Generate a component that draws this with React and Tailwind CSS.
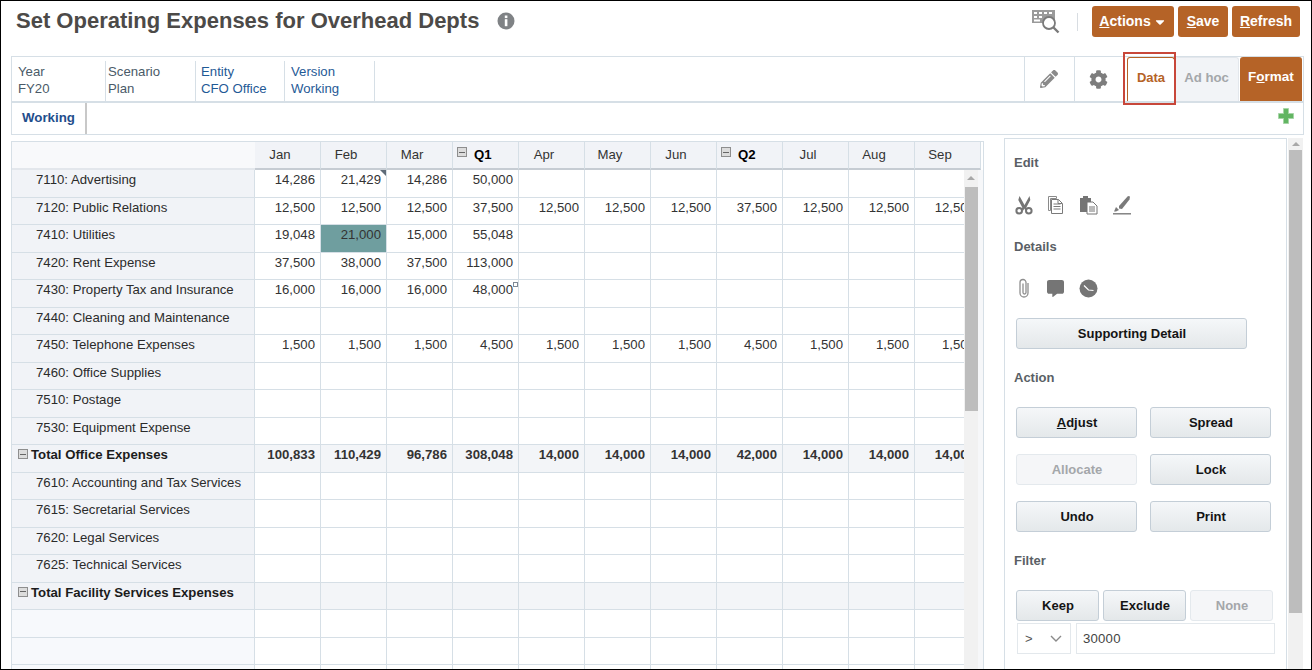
import React from "react";
import { FaPencilAlt, FaCog, FaCommentAlt, FaCaretDown } from "react-icons/fa";

const months = ["Jan","Feb","Mar","Q1","Apr","May","Jun","Q2","Jul","Aug","Sep"];
const e = "";
const rows = [
  ["7110: Advertising", ["14,286","21,429","14,286","50,000"], 0],
  ["7120: Public Relations", ["12,500","12,500","12,500","37,500","12,500","12,500","12,500","37,500","12,500","12,500","12,500"], 0],
  ["7410: Utilities", ["19,048","21,000","15,000","55,048"], 0],
  ["7420: Rent Expense", ["37,500","38,000","37,500","113,000"], 0],
  ["7430: Property Tax and Insurance", ["16,000","16,000","16,000","48,000"], 0],
  ["7440: Cleaning and Maintenance", [], 0],
  ["7450: Telephone Expenses", ["1,500","1,500","1,500","4,500","1,500","1,500","1,500","4,500","1,500","1,500","1,500"], 0],
  ["7460: Office Supplies", [], 0],
  ["7510: Postage", [], 0],
  ["7530: Equipment Expense", [], 0],
  ["Total Office Expenses", ["100,833","110,429","96,786","308,048","14,000","14,000","14,000","42,000","14,000","14,000","14,000"], 1],
  ["7610: Accounting and Tax Services", [], 0],
  ["7615: Secretarial Services", [], 0],
  ["7620: Legal Services", [], 0],
  ["7625: Technical Services", [], 0],
  ["Total Facility Services Expenses", [], 1],
  [e, [], 2],
  [e, [], 2],
  [e, [], 2],
];

function Minus() {
  return (
    <span className="flex w-[10px] h-[10px] shrink-0 items-center justify-center border border-[#8e8e8e] bg-[#dcdcdc]">
      <span className="block w-[6px] h-px bg-[#666]" />
    </span>
  );
}

function Row({ r, i }) {
  const [label, vals, kind] = r;
  return (
    <div className="flex h-[27.5px]">
      <div className={`w-[243px] shrink-0 box-border border-b border-r border-[#d6dfe6] text-[13.2px] leading-[17px] pt-[1px] flex items-start ${kind === 2 ? "bg-[#f7f9fc]" : "bg-[#f1f3f7]"} ${kind === 1 ? "font-bold pl-[6px] text-[#1c1c1c]" : "pl-[24px] text-[#2b2b2b]"}`}>
        {kind === 1 && <span className="mr-[3px] mt-[3px] flex"><Minus /></span>}
        <span className="whitespace-nowrap">{label}</span>
      </div>
      {months.map((m, c) => {
        const teal = i === 2 && c === 1;
        return (
          <div key={m} className={`relative w-[66px] shrink-0 box-border border-b border-r border-[#d6dfe6] text-right pr-[5px] pt-[1px] text-[13.2px] leading-[17px] whitespace-nowrap ${kind === 1 ? "font-bold text-[#333] bg-[#f3f5f8]" : "text-[#333]"} ${teal ? "bg-[#6f9e9f]" : ""}`}>
            {vals[c] || ""}
            {i === 0 && c === 1 && <span className="absolute top-0 right-0 w-0 h-0 border-t-[6px] border-l-[6px] border-t-[#5f6b78] border-l-transparent" />}
            {i === 4 && c === 3 && <span className="absolute top-[2px] right-0 w-[5px] h-[5px] border border-[#7f8a95]" />}
          </div>
        );
      })}
    </div>
  );
}

function Header() {
  return (
    <div className="flex h-[28px] w-[972px]">
      <div className="w-[243px] shrink-0 box-border bg-[#f8f9fb] border-b-2 border-[#e3e7ec]" />
      {months.map((m) => {
        const q = m[0] === "Q";
        return (
          <div key={m} className={`w-[66px] shrink-0 box-border bg-[#f1f3f7] border-r border-b-2 border-r-[#d6dfe6] border-b-[#c6ccd3] text-[13.2px] leading-[17px] pt-[4px] ${q ? "font-bold text-black pl-[4px] flex" : "text-[#333] text-center pr-[15px]"}`}>
            {q ? (<><span className="mt-[1px] mr-[7px] flex h-[10px]"><Minus /></span><span>{m}</span></>) : m}
          </div>
        );
      })}
    </div>
  );
}

function Btn({ children, w = "w-[121px]", disabled }) {
  return (
    <button className={`${w} h-[31px] box-border rounded-[3px] border pl-[1px] text-[13px] font-bold leading-none ${disabled ? "border-[#e4e9ed] bg-[#f5f6f8] text-[#a4a7aa]" : "border-[#c4ced7] bg-gradient-to-b from-[#f5f7f9] to-[#e4e8ea] text-[#141414]"}`}>
      {children}
    </button>
  );
}

function OBtn({ children, w }) {
  return <button className={`${w} h-[31px] rounded-[3px] bg-[#b56327] text-white text-[14px] font-bold flex items-center justify-center`}>{children}</button>;
}

function Dim({ a, b, blue, w, pl }) {
  return (
    <div className={`${w} ${pl} box-border shrink-0 border-r border-[#d6dfe6] h-[41px] mt-[4px] text-[13.2px] leading-[17px] pt-[2px] text-[#4a5a68]`}>
      <div className={blue ? "text-[#1f5a96]" : ""}>{a}</div>
      <div className={blue ? "text-[#1f5a96]" : ""}>{b}</div>
    </div>
  );
}

const Label = ({ children, className = "" }) => <div className={`text-[13px] font-bold text-[#5a5f66] leading-[15px] ${className}`}>{children}</div>;

export default function App() {
  return (
    <div className="w-[1312px] h-[670px] box-border border border-black overflow-hidden bg-white relative" style={{ fontFamily: '"Liberation Sans", Arial, sans-serif' }}>
      {/* title bar */}
      <div className="h-[55px] flex items-start pl-[15px] pr-[11px]">
        <h1 className="text-[22px] font-bold text-[#4c4a48] leading-[26px] mt-[7px]">Set Operating Expenses for Overhead Depts</h1>
        <svg className="ml-[18px] mt-[11px]" width="18" height="18" viewBox="0 0 18 18"><circle cx="9" cy="9" r="8.5" fill="#7f8285"/><rect x="7.8" y="3.5" width="2.6" height="2.6" fill="#fff"/><rect x="7.8" y="7.2" width="2.6" height="7" fill="#fff"/></svg>
        <div className="flex-1" />
        <svg className="mt-[8px]" width="28" height="26" viewBox="0 0 28 26">
          <path d="M0 1h23v13H0z" fill="#9a9a9a"/>
          <g fill="#fff"><rect x="2" y="3" width="3" height="2"/><rect x="7" y="3" width="3" height="2"/><rect x="12" y="3" width="3" height="2"/><rect x="17" y="3" width="3" height="2"/><rect x="2" y="7" width="3" height="2"/><rect x="7" y="7" width="3" height="2"/><rect x="2" y="10.5" width="6" height="2"/></g>
          <circle cx="17" cy="14" r="6" fill="#fff" stroke="#7a7a7a" strokeWidth="1.8"/>
          <path d="M21.5 18.5l5 5" stroke="#7a7a7a" strokeWidth="2.4"/>
        </svg>
        <div className="w-px h-[18px] bg-[#d8dde2] mt-[12px] ml-[17px] mr-[14px]" />
        <div className="flex gap-[4px] mt-[5px]">
          <OBtn w="w-[82px]"><u>A</u>ctions<FaCaretDown className="ml-[2px]" size={14}/></OBtn>
          <OBtn w="w-[50px]"><u>S</u>ave</OBtn>
          <OBtn w="w-[68px]"><u>R</u>efresh</OBtn>
        </div>
      </div>

      {/* POV bar */}
      <div className="ml-[10px] w-[1293px] h-[47px] box-border border border-[#d6dfe6] border-b-2 flex">
        <Dim w="w-[94px]" pl="pl-[6px]" a="Year" b="FY20" />
        <Dim w="w-[90px]" pl="pl-[2px]" a="Scenario" b="Plan" />
        <Dim w="w-[89px]" pl="pl-[5px]" a="Entity" b="CFO Office" blue />
        <Dim w="w-[90px]" pl="pl-[6px]" a="Version" b="Working" blue />
        <div className="flex-1" />
        <div className="w-[50px] border-l border-[#d6dfe6] flex items-center justify-center text-[#8a8a8a] pr-[2px]"><FaPencilAlt size={18}/></div>
        <div className="w-[50px] border-l border-[#d6dfe6] flex items-center justify-center text-[#7d7d7d] pr-[2px]"><FaCog size={19}/></div>
        <div className="w-[48px] ml-[3px] box-border border border-b-0 border-[#b56327] rounded-t-[3px] bg-white text-[#b56327] text-[13px] font-bold flex items-center justify-center pb-[3px]">Data</div>
        <div className="w-[64px] bg-[#f2f4f7] border-t border-r border-[#e3e7ec] rounded-t-[3px] text-[#a4a7aa] text-[13.2px] font-bold flex items-center justify-center pb-[3px]">Ad hoc</div>
        <div className="w-[62px] bg-[#b56327] rounded-t-[3px] text-white text-[13.5px] font-bold flex items-center justify-center ml-px mr-px pb-[3px]">F<u>o</u>rmat</div>
      </div>

      {/* tab bar */}
      <div className="ml-[10px] w-[1293px] h-[32px] box-border border border-t-0 border-[#d6dfe6] flex items-stretch">
        <div className="w-[75px] box-border border-r-2 border-[#c8c8c8] text-center text-[13.3px] font-bold text-[#1f4e8c] pt-[6px] leading-[18px]">Working</div>
        <div className="flex-1" />
        <svg className="mr-[8px] mt-[4px]" width="18" height="18" viewBox="0 0 18 18"><path d="M6.5 1.5h5v5H16.5v5h-5V16.5h-5v-5H1.5v-5h5z" fill="#62b562" stroke="#a6d5a6"/></svg>
      </div>

      {/* content */}
      <div className="flex items-start ml-[10px]">
        {/* grid */}
        <div className="w-[973px] h-[532px] mt-[6px] box-border border-l border-t border-r border-[#d6dfe6] overflow-hidden">
          <Header />
          <div className="flex">
            <div className="w-[952px] overflow-hidden shrink-0">
              <div className="w-[972px]">
                {rows.map((r, i) => <Row key={i} r={r} i={i} />)}
              </div>
            </div>
            <div className="w-[14px] h-[504px] bg-[#f1f1f1] shrink-0 flex flex-col items-center">
              <span className="mt-[6px] w-0 h-0 border-x-[4px] border-b-[4px] border-x-transparent border-b-[#a8a8a8]" />
              <div className="mt-[7px] w-[13px] h-[224px] bg-[#bdbdbd]" />
            </div>
            <div className="flex-1 h-[504px] bg-[#f6f7f9]" />
          </div>
        </div>

        {/* side panel */}
        <div className="ml-[20px] mt-[3px] w-[283px] h-[535px] box-border border-l border-t border-r border-[#d6dfe6] pl-[9px]">
          <Label className="mt-[16px]">Edit</Label>
          <div className="flex items-center gap-[14px] mt-[24px] ml-[1px] h-[22px]">
            <svg width="18" height="20" viewBox="0 0 18 20"><path d="M4.5 1l5 9 5-9 .8 4-4 7.5 1 1.5-2 1.5-1-2-1 2-2-1.5 1-1.5-4-7.500z" fill="#757575"/><circle cx="4.200" cy="15.800" r="2.800" fill="#fff" stroke="#757575" strokeWidth="2"/><circle cx="13.800" cy="15.800" r="2.800" fill="#fff" stroke="#757575" strokeWidth="2"/></svg>
            <svg width="18" height="20" viewBox="0 0 18 20"><path d="M1.500 1.500h8v2H3.500v12H1.500z" fill="none" stroke="#8a8a8a"/><path d="M4.500 4.500h7l4 4v10h-11z" fill="#fff" stroke="#7a7a7a"/><path d="M6.500 9h7M6.500 11.500h7M6.500 14h7M11 4.500v4h4" stroke="#7a7a7a" fill="none"/></svg>
            <svg width="20" height="20" viewBox="0 0 20 20"><path d="M1 3h3V1h5v2h3v14H1z" fill="#757575"/><path d="M8 7h6l4 4v8H8z" fill="#fff" stroke="#757575"/><path d="M10 12h6M10 14h6M10 16h6" stroke="#757575"/></svg>
            <svg width="18" height="20" viewBox="0 0 18 20"><path d="M6 11L15 1l2 .5-.5 3L9 14l-3-.5z" fill="#7a7a7a"/><path d="M3 12l3 3-3 1.500H1z" fill="#7a7a7a"/><path d="M0 18.800h18" stroke="#7a7a7a" strokeWidth="1.400"/></svg>
          </div>
          <Label className="mt-[23px]">Details</Label>
          <div className="flex items-center gap-[14px] mt-[23px] ml-[1px] h-[22px]">
            <svg width="18" height="20" viewBox="0 0 18 20"><path d="M8 5.500v9a1.500 1.500 0 0 0 3 0V4.500a3 3 0 0 0-6 0V15a3.800 3.800 0 0 0 8 0V5" fill="none" stroke="#8e8e8e" strokeWidth="1.300"/></svg>
            <FaCommentAlt size={17} className="text-[#757575]" />
            <svg width="19" height="19" viewBox="0 0 19 19" className="ml-[1px]"><circle cx="9.500" cy="9.500" r="9" fill="#757575"/><path d="M5 6.500l4.500 4.500 5 .5" fill="none" stroke="#fff" strokeWidth="1.200"/></svg>
          </div>
          <div className="mt-[19px] ml-[2px]"><Btn w="w-[231px]">Supporting Detail</Btn></div>
          <Label className="mt-[21px]">Action</Label>
          <div className="grid grid-cols-[121px_121px] gap-x-[13px] gap-y-[16px] mt-[22px] ml-[2px]">
            <Btn><u>A</u>djust</Btn><Btn>Spread</Btn>
            <Btn disabled>Allocate</Btn><Btn>Lock</Btn>
            <Btn>Undo</Btn><Btn>Print</Btn>
          </div>
          <Label className="mt-[21px]">Filter</Label>
          <div className="flex gap-[4px] mt-[22px] ml-[2px]">
            <Btn w="w-[83px]">Keep</Btn><Btn w="w-[83px]">Exclude</Btn><Btn w="w-[83px]" disabled>None</Btn>
          </div>
          <div className="flex gap-[5px] mt-[2px] ml-[3px]">
            <div className="w-[54px] h-[31px] box-border border border-[#e3e8ec] flex items-center justify-between pl-[7px] pr-[8px] text-[#555] text-[13px]">
              <span>&gt;</span>
              <svg width="12" height="7" viewBox="0 0 12 7"><path d="M1 1l5 5 5-5" fill="none" stroke="#8a8a8a" strokeWidth="1.400"/></svg>
            </div>
            <div className="w-[199px] h-[31px] box-border border border-[#e3e8ec] flex items-center pl-[6px] text-[13.2px] text-[#444] tracking-[0.2px]">30000</div>
          </div>
        </div>

        {/* panel scrollbar */}
        <div className="ml-[1px] mt-[3px] w-[15px] h-[535px] bg-[#f1f1f1] flex flex-col items-center">
          <span className="mt-[4px] w-0 h-0 border-x-[4px] border-b-[4px] border-x-transparent border-b-[#a8a8a8]" />
          <div className="mt-[4px] w-[13px] h-[463px] bg-[#bdbdbd]" />
        </div>
      </div>

      {/* highlight annotation */}
      <div className="absolute left-[1122px] top-[51px] w-[53px] h-[53px] border-2 border-[#c8473a]" />
    </div>
  );
}
